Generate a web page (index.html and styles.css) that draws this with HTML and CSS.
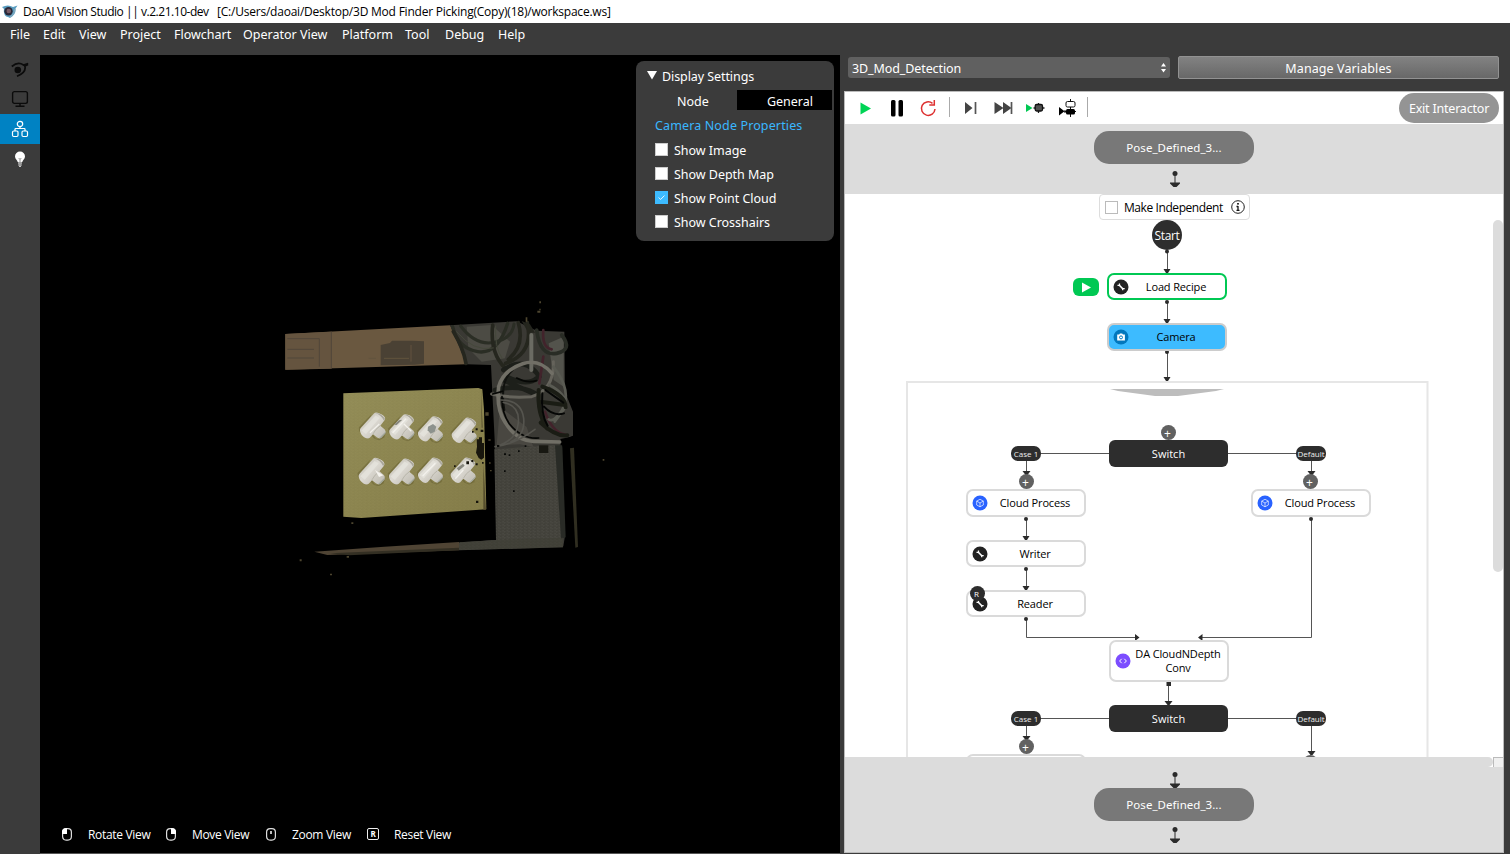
FILE: index.html
```html
<!DOCTYPE html>
<html lang="en">
<head>
<meta charset="utf-8">
<title>DaoAI Vision Studio</title>
<link rel="stylesheet" href="styles.css">
</head>
<body>
<svg class="defs" width="0" height="0">
  <defs>
    <symbol id="wrench" viewBox="0 0 16 16"><circle cx="8" cy="8" r="7.500" fill="#222"/><path d="M6.300 6.300l3.600 3.600" stroke="#fff" stroke-width="1.500"/><path d="M4.500 6.300h2V4.500M9.700 11.300V9.600h2" fill="none" stroke="#fff" stroke-width="1.300"/></symbol>
    <symbol id="cube" viewBox="0 0 16 16"><circle cx="8" cy="8" r="7.500" fill="#2962ff"/><path d="M8 4.300l3.300 1.800v3.900L8 11.800 4.700 10V6.100zM4.700 6.100L8 8l3.300-1.900M8 8v3.800" fill="none" stroke="#fff" stroke-opacity=".85" stroke-width=".8"/></symbol>
    <symbol id="code" viewBox="0 0 16 16"><circle cx="8" cy="8" r="7.500" fill="#7c4dff"/><path d="M6.700 5.800L4.600 8l2.100 2.200M9.300 5.800L11.400 8l-2.100 2.200" fill="none" stroke="#fff" stroke-width="1"/></symbol>
    <symbol id="cam" viewBox="0 0 16 16"><circle cx="8" cy="8" r="7.500" fill="#0277bd"/><path d="M4.200 5.500h2l.7-1h2.300l.7 1h2v6H4.200z" fill="#fff"/><circle cx="8" cy="8.400" r="1.500" fill="none" stroke="#0277bd"/></symbol>
    <linearGradient id="pipe" x1="0" y1="0" x2="1" y2="1"><stop offset=".2" stop-color="#c6c3b8"/><stop offset=".45" stop-color="#dddad3"/><stop offset="1" stop-color="#bcb9af"/></linearGradient>
    <symbol id="tee" viewBox="0 0 90 90">
      <path d="M0 52L40 10l-8 18L2 66zM22 84l22-12 10 14 12 2 20-22-6 18-16 8-16-6-8-10-12 10z" fill="#5d5428" opacity=".4"/>
      <path d="M4 62Q3 57 8 52L48 8Q53 2 64 7 79 12 83 22 84 27 80 31L68 46 82 58Q87 64 83 71L71 83Q65 88 58 83L45 73 35 84Q29 89 20 84 7 77 4 62z" fill="url(#pipe)"/>
      <path d="M9 61L53 14l13 8-43 50z" fill="#e6e4de" opacity=".75"/>
      <path d="M52 7q20-2 31 18l-4 5Q71 12 52 7z" fill="#aaa79b"/>
      <path d="M64 85l21-21q0 7-4 10l-9 9q-4 4-8 2z" fill="#a3a79b"/>
      <path d="M45 72q8-16 22-25" fill="none" stroke="#b6b3a8" stroke-width="3"/>
    </symbol>
    <symbol id="link" viewBox="0 0 12 17"><circle cx="6" cy="2.500" r="2.500"/><path d="M5.500 2h1v10h-1zM1 11.500h10v1L7.500 16h-3L1 12.500z"/></symbol>
    <pattern id="grain" width="13" height="9" patternUnits="userSpaceOnUse"><path d="M0 2h7M5 6h8M2 8h3" stroke="#000" stroke-opacity=".13" stroke-width="2"/><path d="M8 3h5M0 5h4" stroke="#fff" stroke-opacity=".04" stroke-width="2"/></pattern>
    <linearGradient id="board" x1="0" y1="0" x2="1" y2="1"><stop offset="0" stop-color="#948e58"/><stop offset=".5" stop-color="#8d8650"/><stop offset="1" stop-color="#857d49"/></linearGradient>
  </defs>
</svg>

<header class="titlebar">
  <svg class="logo" viewBox="0 0 16 14"><path d="M0 2Q6-1 11 2l4.500-1.500-2 3q1 6-5.500 9.500L6 12Q1 11 2 4z" fill="#5a9dc0"/><circle cx="6.500" cy="6.300" r="4.200" fill="#2a2838"/><circle cx="6.800" cy="6" r="2.300" fill="#795c66"/><path d="M13 4q0 5-5.500 8.500" stroke="#8caab9" fill="none"/></svg>
  <span class="app-title">DaoAI Vision Studio || v.2.21.10-dev</span>
  <span class="app-path">[C:/Users/daoai/Desktop/3D Mod Finder Picking(Copy)(18)/workspace.ws]</span>
</header>
<nav class="menubar">
  <span class="m-file">File</span><span class="m-edit">Edit</span><span class="m-view">View</span><span class="m-project">Project</span><span class="m-flow">Flowchart</span><span class="m-op">Operator View</span><span class="m-plat">Platform</span><span class="m-tool">Tool</span><span class="m-debug">Debug</span><span>Help</span>
</nav>

<div class="workspace">
  <aside class="rail">
    <div class="rail-item"><svg width="18" height="16" viewBox="0 0 18 16"><path d="M.8 4.500Q7-.8 12.500 3l4.700-1.500M14 4.500q1.200 6-8 9.700M13 4.500l4-2" fill="none" stroke="#0b0b0b" stroke-width="1.700"/><circle cx="6.800" cy="8" r="3.300" fill="#0b0b0b"/></svg></div>
    <div class="rail-item"><svg width="18" height="18" viewBox="0 0 18 18" fill="none" stroke="#0b0b0b" stroke-width="1.400"><rect x="1.600" y="1.600" width="14.800" height="11.800" rx="1.800"/><path d="M9 13.500V16M4.500 16.300h9"/></svg></div>
    <div class="rail-item active"><svg width="18" height="18" viewBox="0 0 18 18" fill="none" stroke="#fff" stroke-width="1.200"><circle cx="9" cy="4" r="2.700"/><path d="M9 6.700V9M4 11V9.200q0-.7.800-.7h8.400q.8 0 .8.700V11"/><rect x="1.500" y="11" width="5.500" height="5.500" rx="1.200"/><rect x="11" y="11" width="5.500" height="5.500" rx="1.200"/></svg></div>
    <div class="rail-item"><svg width="12" height="16" viewBox="0 0 12 16"><path d="M6 .5a5 5 0 0 1 5 5c0 2.500-2.500 3.500-2.700 5.500H3.700C3.500 9 1 8 1 5.500a5 5 0 0 1 5-5z" fill="#fff"/><path d="M4 12h4M4.300 14h3.400M5.300 15.500h1.400" stroke="#fff"/><path d="M4.700 7L6 8.500 7.300 7M6 8.500V11" fill="none" stroke="#777" stroke-width=".8"/></svg></div>
  </aside>

  <main class="viewport">
    <svg class="scene" width="350" height="290" viewBox="0 0 1050 870">
      <path d="M46 132L540 106l30 60 20 57L46 239z" fill="#6a5840"/>
      <path d="M46 132L184 125v111L46 239z" fill="#65543f"/>
      <path d="M184 125v111M52 146h96v84M52 178h80M52 204h80" fill="none" stroke="#51463a" stroke-width="3"/>
      <path d="M332 165l28-6 6-7h62l34 2v67l-28 3-102 2z" fill="#4a4134"/>
      <path d="M342 205h75M423 165v50M296 205h22" stroke="#62533e" stroke-width="3"/>
      <path d="M540 106L740 94l30 14 30 14 83 3 2 180 24 60v72l-38 16 14 284-5 32-310 10V757l109-7-5-300-11-225-73-2z" fill="#3a3934"/>
      <path d="M755 93l25 10 15 25-20 0z" fill="#24251e"/>
      <path d="M673 478l194-14 12 308-312 9v-23l111-8z" fill="#46453e"/>
      <path d="M673 478l194-14 12 308-312 9v-23l111-8z" fill="url(#grain)"/>
      <path d="M855 466h22l10 276-14 4z" fill="#292b26"/>
      <path d="M871 447l40-8 4 34-35 4z" fill="#000"/>
      <path d="M900 475l12-2 12 298-8 2z" fill="#302e20"/>
      <path d="M133 785l210-15 224-14v25l-395 14z" fill="#4f4434"/>
      <path d="M180 790l210-9 177-8v8l-330 15z" fill="#332f23"/>
      <path d="M567 757l112-7 200-7v29l-312 8z" fill="#403f36" opacity=".6"/>
      <g fill="none" stroke-linecap="round">
        <path d="M590 110l75-5 55 50-15 50-70 10-40-40z" fill="#4c4b44" stroke="none"/>
        <path d="M836 160l45-20v150l-30-20z" fill="#53534c" stroke="none"/>
        <path d="M680 465l70-2 40 8-20-60-80-60z" fill="#494741" stroke="none"/>
        <path d="M548 110q15 65 75 75t90-85" stroke="#2a2d24" stroke-width="10"/>
        <path d="M572 108q45 60 100 49t60-55" stroke="#2b2e25" stroke-width="9"/>
        <path d="M550 125q30 50 38 95M668 105q-10 95 50 140M745 98q20 70-30 110M772 98q20 92-65 122" stroke="#25261e" stroke-width="11"/>
        <path d="M560 125q50 62 110 49M677 108q-4 64 20 98" stroke="#45483b" stroke-width="3"/>
        <path d="M700 240q65-45 108 20M710 260q60 30 90 5M675 300q70-18 120 10M700 270l90 40" stroke="#1d1f1a" stroke-width="14"/>
        <path d="M800 120q10 80 60 70t15-55" stroke="#292c25" stroke-width="11"/>
        <path d="M820 120q-5 52 25 58M820 200l-12 80M825 365q20 60 60 69" stroke="#42232b" stroke-width="8"/>
        <path d="M784 135v105" stroke="#6b6b63" stroke-width="12"/>
        <path d="M703 360q-15-85 25-120" stroke="#11120f" stroke-width="6"/>
        <path d="M850 215q3 85-65 105-70 5-120-8" stroke="#65635b" stroke-width="9"/>
        <path d="M846 250Q808 205 758 221 700 240 686 290q-8 68 20 108 33 54 85 56l78 2" stroke="#716f66" stroke-width="11"/>
        <path d="M696 320q-2 46 22 81 38 47 88 43" stroke="#050604" stroke-width="5"/>
        <path d="M850 230q60 75 24 134-25 35-38 24M838 285q50 25 50 65l-34 45" stroke="#5a5b53" stroke-width="8"/>
        <path d="M806 300q-5 70 25 115M817 290q70 25 70 62M810 335l75 10M812 398q45 42 80 38" stroke="#1a1c14" stroke-width="12"/>
        <path d="M826 300l54 38M822 350q28 30 60 20M817 310q-5 64 16 97" stroke="#050605" stroke-width="6"/>
        <path d="M692 330q62 0 69 55 5 51-38 70M700 337q50 10 45 62t-65 70M675 470q60-7 120-52" stroke="#55544e" stroke-width="5"/>
        <path d="M668 312l30-8M740 264q28 16 60 8" stroke="#060705" stroke-width="5"/>
      </g>
      <path d="M807 466h28v23h-28z" fill="#181812"/>
      <path d="M220 310L625 294l12 4 5 60 7 300-375 26-54-4z" fill="url(#board)"/>
      <path d="M220 310L637 297l9 362-372 25-54-4z" fill="url(#grain)" opacity=".25"/>
      <path d="M633 298l5 115h-3zM640 520l8 139h-8z" fill="#574f2e"/>
      <use href="#tee" x="266" y="361" width="86" height="90"/>
      <use href="#tee" x="354" y="365" width="84" height="90"/>
      <use href="#tee" x="440" y="371" width="84" height="90"/>
      <use href="#tee" x="541" y="375" width="84" height="90"/>
      <use href="#tee" x="262" y="498" width="88" height="90"/>
      <use href="#tee" x="353" y="499" width="86" height="90"/>
      <use href="#tee" x="440" y="495" width="84" height="90"/>
      <use href="#tee" x="538" y="495" width="84" height="90"/>
      <path d="M474 410l15-8 10 8-5 15-12 6-9-10z" fill="#8d928d"/>
      <path d="M372 404l15-13 10-2-17 16zM560 535l19-14 5 6-18 15z" fill="#87877e"/>
      <path d="M315 540l25 16-13 5z" fill="#f5f3ee"/>
      <path d="M368 428l40-42M402 402l22 22M300 428l28-26M458 558l38-38M556 566l24-26" fill="none" stroke="#f3f1ec" stroke-width="4"/>
      <path d="M620 448h7v-6h9v17h6v44l-8 6-8-5-8-16 3-18z" fill="#18160d"/>
      <path d="M617 415h6v6h-6zM632 419h8v7h-8zM606 423h5v5h-5zM589 514h8v9h-8zM604 510h6v6h-6zM617 520h6v6h-6zM636 516h5v5h-5zM618 632h7v7h-7zM552 526h5v5h-5z" fill="#16140c"/>
      <path d="M655 448h7v4h-7zM657 517h5v4h-5zM660 540h5v4h-5zM244 697h6v5h-6zM89 808h6v6h-6zM180 851h6v5h-6zM998 507h5v5h-5zM808 34h5v6h-5zM802 62h9v6h-9zM808 56h4v5h-4zM767 82h5v13h-5zM646 367h10v10h-10zM230 798h7v5h-7z" fill="#4d452f"/>
      <path d="M681 465h7v6h-7zM702 490h6v5h-6zM716 493h5v5h-5zM744 481h5v5h-5zM764 466h5v5h-5zM702 541h5v5h-5zM729 601h5v5h-5z" fill="#090a08"/>
    </svg>

    <section class="settings">
      <h2><svg width="10" height="9" viewBox="0 0 10 9"><path d="M0 0h10L5 8.500z" fill="#fff"/></svg>Display Settings</h2>
      <div class="tabs"><span class="tab">Node</span><span class="tab tab-on">General</span></div>
      <h3>Camera Node Properties</h3>
      <div class="opt"><i></i>Show Image</div>
      <div class="opt"><i></i>Show Depth Map</div>
      <div class="opt"><i class="on"><svg width="13" height="13" viewBox="0 0 13 13"><path d="M3 6.500l2.500 2.300 4.500-4.600" fill="none" stroke="#fff"/></svg></i>Show Point Cloud</div>
      <div class="opt"><i></i>Show Crosshairs</div>
    </section>

    <footer class="hints">
      <svg width="10" height="13" viewBox="0 0 10 13"><rect x=".6" y=".6" width="8.800" height="11.500" rx="3.500" fill="none" stroke="#ddd" stroke-width="1.200"/><path d="M0 6V3q1-3 5-3v6z" fill="#fff"/></svg><span class="h-rotate">Rotate View</span>
      <svg width="10" height="13" viewBox="0 0 10 13"><rect x=".6" y=".6" width="8.800" height="11.500" rx="3.500" fill="none" stroke="#ddd" stroke-width="1.200"/><path d="M10 6V3Q9 0 5 0v6z" fill="#fff"/></svg><span class="h-move">Move View</span>
      <svg width="10" height="13" viewBox="0 0 10 13"><rect x=".6" y=".6" width="8.800" height="11.500" rx="3.500" fill="none" stroke="#ddd" stroke-width="1.200"/><path d="M5 3v3" stroke="#fff" stroke-width="1.500"/></svg><span class="h-zoom">Zoom View</span>
      <b class="key">R</b><span class="h-reset">Reset View</span>
    </footer>
  </main>

  <section class="side">
    <div class="pickers">
      <div class="select"><span>3D_Mod_Detection</span><svg width="5" height="10" viewBox="0 0 5 10"><path d="M2.500 0L5 3.500H0zM2.500 9.500L5 6H0z" fill="#fff"/></svg></div>
      <div class="manage">Manage Variables</div>
    </div>
    <div class="panel">
      <div class="toolbar">
        <svg class="tools" width="250" height="32" viewBox="0 -1 250 32">
          <path d="M15.500 9.500v12l10.500-6z" fill="#00d455"/>
          <rect x="46" y="7" width="4.500" height="16.500" rx="1.500"/><rect x="53.500" y="7" width="4.500" height="16.500" rx="1.500"/>
          <path d="M87.500 10.300A6.800 6.800 0 1 0 90 16" fill="none" stroke="#dd3030" stroke-width="1.500"/><path d="M89.300 7v5h-5" fill="none" stroke="#dd3030" stroke-width="1.500"/>
          <path d="M104.500 4v20M242.500 4v20" stroke="#aaa"/>
          <path d="M120 9v12l7.500-6zM149.500 9v12l9-6zM158 9v12l8.500-6z" fill="#444"/><path d="M130.500 9v12M166.500 9v12" stroke="#555" stroke-width="1.700"/>
          <path d="M181 11v8l6.500-4z" fill="#00c853"/><path d="M188.500 15h11M193.500 10v10" stroke="#222" stroke-width="1.300"/><rect x="190.200" y="11.500" width="7.300" height="6.500" rx="1.500" fill="#505050" stroke="#111" stroke-width="1.300"/>
          <path d="M214 14v8.500l5.500-4.200zM219 17.500h2v2h-2z"/><path d="M225.500 6v18M220 18.500h11" stroke="#111"/><rect x="221" y="8.500" width="9" height="5.500" rx="1.500" fill="#fff" stroke="#111"/><rect x="221" y="16" width="9" height="5.500" rx="1.500"/>
        </svg>
        <div class="exit">Exit Interactor</div>
      </div>
      <div class="band band-top">
        <div class="pill">Pose_Defined_3...</div>
        <svg class="arrow" width="12" height="17"><use href="#link"/></svg>
      </div>

      <div class="flow">
        <svg class="wires" width="658" height="563" viewBox="845 194 658 563">
          <g fill="none" stroke="#555">
            <path d="M1167.500 251v21M1167.500 301v21M1167.500 351v29M1026.500 460v14M1311.500 460v14M1026.500 518v21M1026.500 568v21M1026.500 618v19.500H1137M1311.500 518v119.500H1200M1168.500 683v21M1026.500 725v13M1311.500 725v29M1041 453.500h68M1228 453.500h69M1041 718.500h68M1228 718.500h69"/>
          </g>
          <g fill="#2b2b2b">
            <path d="M1163.500 269h7l-2.500 4h-2zM1163.500 319h7l-2.500 4h-2zM1163.500 377h7l-2.500 4h-2zM1022.500 471h8l-3 4h-2zM1307.500 471h8l-3 4h-2zM1022.500 536h7l-2.500 4h-2zM1022.500 586h7l-2.500 4h-2zM1164.500 701h8l-3 4h-2zM1022.500 736h8l-3 4h-2zM1307.500 751h8l-3 4h-2zM1135 634l4.500 3.500-4.500 3.500zM1202.500 634l-4.500 3.500 4.500 3.500z"/>
            <circle cx="1167" cy="251.500" r="2"/><circle cx="1167" cy="302" r="2"/><circle cx="1167" cy="352" r="2"/><circle cx="1026" cy="519" r="2"/><circle cx="1311" cy="519" r="2"/><circle cx="1026" cy="569" r="2"/><circle cx="1026" cy="619" r="2"/><rect x="1166.500" y="682" width="4.500" height="4"/>
          </g>
          <path d="M906 382h522.500M907 381v376M1427.500 381v376" stroke="#e6e6e6" stroke-width="2" fill="none"/>
          <path d="M1110 389h114l-8 2-38 5h-23l-37-5z" fill="#bdbdbd"/>
        </svg>
        <div class="indep"><i></i><span>Make Independent</span><svg width="14" height="14" viewBox="0 0 14 14"><circle cx="7" cy="7" r="6.300" fill="none" stroke="#222"/><path d="M7 6v4.500M5.500 6.500H7M5.500 10.300h3" stroke="#111" stroke-width="1.300"/><rect x="6.200" y="3" width="1.600" height="1.600"/></svg></div>
        <div class="start">Start</div>
        <div class="run"><svg width="11" height="11" viewBox="0 0 11 11"><path d="M1 .5v10l9-5z" fill="#fff"/></svg></div>
        <div class="node current at-load"><svg class="ic"><use href="#wrench"/></svg><span>Load Recipe</span></div>
        <div class="node selected at-camera"><svg class="ic"><use href="#cam"/></svg><span>Camera</span></div>
        <div class="plus plus-a">+</div>
        <div class="switch switch-a">Switch</div>
        <div class="case case-a">Case 1</div>
        <div class="case case-b">Default</div>
        <div class="plus plus-b">+</div>
        <div class="plus plus-c">+</div>
        <div class="node at-cloud"><svg class="ic"><use href="#cube"/></svg><span>Cloud Process</span></div>
        <div class="node at-cloud2"><svg class="ic"><use href="#cube"/></svg><span>Cloud Process</span></div>
        <div class="node at-writer"><svg class="ic"><use href="#wrench"/></svg><span>Writer</span></div>
        <div class="node at-reader"><svg class="ic"><use href="#wrench"/></svg><span>Reader</span></div>
        <div class="reader-badge">R</div>
        <div class="node at-conv"><svg class="ic"><use href="#code"/></svg><span>DA CloudNDepth<br>Conv</span></div>
        <div class="switch switch-b">Switch</div>
        <div class="case case-c">Case 1</div>
        <div class="case case-d">Default</div>
        <div class="plus plus-d">+</div>
        <div class="plus plus-e"></div>
        <div class="node at-next"></div>
        <div class="vbar"></div>
      </div>
      <div class="hbar"><div class="hthumb"></div><div class="corner"></div></div>
      <div class="band band-bottom">
        <svg class="arrow" width="12" height="17"><use href="#link"/></svg>
        <div class="pill">Pose_Defined_3...</div>
        <svg class="arrow" width="12" height="17"><use href="#link"/></svg>
      </div>
    </div>
  </section>
</div>
</body>
</html>
```
FILE: styles.css
```css
* { box-sizing: border-box; }
body { margin: 0; width: 1510px; height: 854px; overflow: hidden; background: #3b3b3b; color: #fff; font-family: "Noto Sans", "Open Sans", sans-serif; font-size: 12px; white-space: nowrap; display: flex; flex-direction: column; }
.defs { position: absolute; }
.titlebar { height: 23px; flex: none; background: #fff; color: #000; display: flex; align-items: center; padding-left: 2px; font-family: "Open Sans", sans-serif; font-size: 12px; letter-spacing: -.22px; }
.logo { width: 16px; height: 14px; margin-right: 5px; }
.app-title { width: 194px; letter-spacing: -.46px; }
.menubar { height: 32px; flex: none; display: flex; align-items: flex-start; padding: 3px 0 0 10px; line-height: 17px; font-size: 12.5px; }
.m-file { width: 33px; } .m-edit { width: 36px; } .m-view { width: 41px; } .m-project { width: 54px; } .m-flow { width: 69px; } .m-op { width: 99px; } .m-plat { width: 63px; } .m-tool { width: 40px; } .m-debug { width: 53px; }
.workspace { flex: 1; display: flex; min-height: 0; }
.rail { width: 40px; flex: none; }
.rail-item { height: 30px; display: flex; align-items: center; justify-content: center; }
.rail-item:first-child { height: 29px; }
.active { background: #0082c3; }
.viewport { width: 800px; flex: none; background: #000; border-bottom: 1px solid #555; position: relative; display: flex; flex-direction: column; justify-content: space-between; }
.scene { position: absolute; left: 230px; top: 235px; }
.settings { align-self: flex-end; margin: 6px 6px 0 0; width: 198px; height: 180px; background: #3b3b3b; border-radius: 8px; padding: 6px 2px 0 11px; font-size: 12.5px; letter-spacing: -.03px; }
.settings h2 { margin: 0; height: 23px; line-height: 20px; font-size: 12.5px; font-weight: 400; letter-spacing: -.08px; }
.settings h2 svg { margin: 0 5px 1px 0; }
.tabs { display: flex; height: 20px; line-height: 23px; }
.tab { width: 90px; padding-left: 30px; }
.tab-on { background: #000; width: 95px; }
.settings h3 { margin: 6px 0 2px 8px; line-height: 20px; font-size: 12.5px; font-weight: 400; color: #3ab7ff; letter-spacing: .13px; }
.opt { height: 24px; display: flex; align-items: center; padding-left: 8px; }
.opt i { width: 13px; height: 13px; margin: -1px 6px 0 0; background: #fff; border: 1px solid #ccc; }
.opt i.on { background: #3dbbff; border-color: #3dbbff; display: flex; align-items: center; justify-content: center; }
.hints { display: flex; align-items: center; height: 38px; padding-left: 22px; font-family: "Open Sans", sans-serif; font-size: 12px; letter-spacing: -.32px; }
.hints svg, .key { flex: none; }
.hints span { margin-left: 16px; }
.h-rotate { width: 78px; } .h-move { width: 74px; } .h-zoom { width: 75px; }
.hints .h-reset { margin-left: 15px; }
.key { width: 12px; height: 12px; border: 1px solid #eee; border-radius: 2px; font-size: 8px; line-height: 10px; text-align: center; }
.side { width: 670px; flex: none; padding: 1px 6px 0 4px; display: flex; flex-direction: column; }
.pickers { display: flex; align-items: flex-start; height: 24px; gap: 8px; padding-left: 4px; margin-bottom: 11px; font-size: 12.5px; }
.select { width: 322px; height: 21px; margin-top: 1px; border-radius: 3px; background: #606060; display: flex; align-items: center; justify-content: space-between; padding: 1px 4px 0 4px; letter-spacing: -.1px; }
.manage { width: 321px; height: 23px; line-height: 23px; border: 1px solid #929292; border-radius: 2px; text-align: center; background: linear-gradient(#828282, #686868); letter-spacing: .1px; }
.panel { width: 660px; height: 762px; background: #fff; border: 1px solid #bbb; display: flex; flex-direction: column; }
.toolbar { height: 32px; flex: none; display: flex; justify-content: space-between; align-items: flex-start; }
.exit { width: 100px; height: 30px; margin: 1px 4px 0 0; border-radius: 15px; background: #949494; text-align: center; line-height: 32px; font-size: 12.5px; letter-spacing: -.2px; }
.band { background: #dcdcdc; display: flex; flex-direction: column; align-items: center; flex: none; }
.band-top { height: 70px; padding-top: 7px; }
.band-bottom { height: 85px; padding: 5px 0 0; }
.pill { width: 160px; height: 33px; flex: none; border-radius: 15px; background: #787878; line-height: 33px; text-align: center; font-size: 11.5px; letter-spacing: .05px; }
.arrow { fill: #2b2b2b; flex: none; position: relative; left: .5px; }
.band-top .arrow { margin-top: 7px; }
.band-bottom .arrow:first-child { margin-bottom: -1px; }
.band-bottom .arrow:last-child { margin-top: 6px; }
.flow { position: relative; height: 563px; flex: none; overflow: hidden; color: #000; font-family: "Open Sans", "Noto Sans", sans-serif; font-size: 11px; }
.wires { position: absolute; left: 0; top: 0; }
.indep { position: absolute; left: 254px; top: 0; width: 151px; height: 26px; border: 1px solid #ddd; border-radius: 4px; display: flex; align-items: center; padding-left: 5px; background: #fff; }
.indep i { width: 13px; height: 13px; border: 1px solid #bbb; margin-right: 6px; }
.indep span { width: 107px; font-size: 12px; letter-spacing: -.42px; }
.start { position: absolute; left: 307px; top: 26px; width: 30px; height: 30px; border-radius: 50%; background: #2d2d2d; color: #fff; line-height: 31px; text-align: center; font-size: 12px; letter-spacing: -.3px; }
.run { position: absolute; left: 228px; top: 84px; width: 26px; height: 18px; border-radius: 6px; background: #00c853; display: flex; align-items: center; justify-content: center; }
.node { position: absolute; width: 120px; height: 28px; border: 2px solid #dadada; border-radius: 7px; background: #fff; display: flex; align-items: center; }
.node .ic { width: 16px; height: 16px; margin-left: 4px; flex: none; }
.node span { flex: 1; text-align: center; line-height: 14px; letter-spacing: -.15px; padding-right: 2px; }
.at-load { left: 262px; top: 79px; height: 27px; } .at-camera { left: 262px; top: 129px; }
.current { border-color: #00c853; }
.selected { background: #3dbbff; border-color: #ccc; }
.at-cloud { left: 121px; top: 295px; } .at-cloud2 { left: 406px; top: 295px; }
.at-writer { left: 121px; top: 346px; height: 27px; } .at-reader { left: 121px; top: 396px; height: 27px; }
.at-conv { left: 264px; top: 446px; height: 42px; }
.at-next { left: 121px; top: 560px; }
.switch { position: absolute; left: 264px; width: 119px; height: 27px; border-radius: 6px; background: #2d2d2d; color: #fff; text-align: center; line-height: 28px; }
.switch-a { top: 246px; } .switch-b { top: 511px; }
.case { position: absolute; width: 30px; height: 15px; border-radius: 7px; background: #2d2d2d; color: #eee; font-size: 8px; line-height: 16px; text-align: center; }
.case-a { left: 166px; top: 252px; } .case-b { left: 451px; top: 252px; } .case-c { left: 166px; top: 517px; } .case-d { left: 451px; top: 517px; }
.plus { position: absolute; width: 15px; height: 15px; border-radius: 50%; background: #616161; color: #fff; font-size: 12px; line-height: 17px; text-align: center; padding-right: 2px; }
.plus-a { left: 316px; top: 231px; } .plus-b { left: 174px; top: 280px; } .plus-c { left: 458px; top: 280px; } .plus-d { left: 174px; top: 545px; } .plus-e { left: 458px; top: 561px; }
.reader-badge { position: absolute; left: 125px; top: 392px; width: 15px; height: 15px; border-radius: 50%; background: #2d2d2d; color: #fff; font-size: 8px; line-height: 16px; text-align: center; padding-right: 2px; }
.vbar { position: absolute; right: 0; top: 26px; width: 10px; height: 352px; border-radius: 5px; background: #dcdcdc; }
.hbar { height: 10px; flex: none; display: flex; justify-content: space-between; }
.hthumb { width: 648px; background: #dcdcdc; border-radius: 0 5px 5px 0; }
.corner { width: 10px; background: #f0f0f0; border: 1px solid #bbb; border-width: 1px 0 0 1px; }
```
